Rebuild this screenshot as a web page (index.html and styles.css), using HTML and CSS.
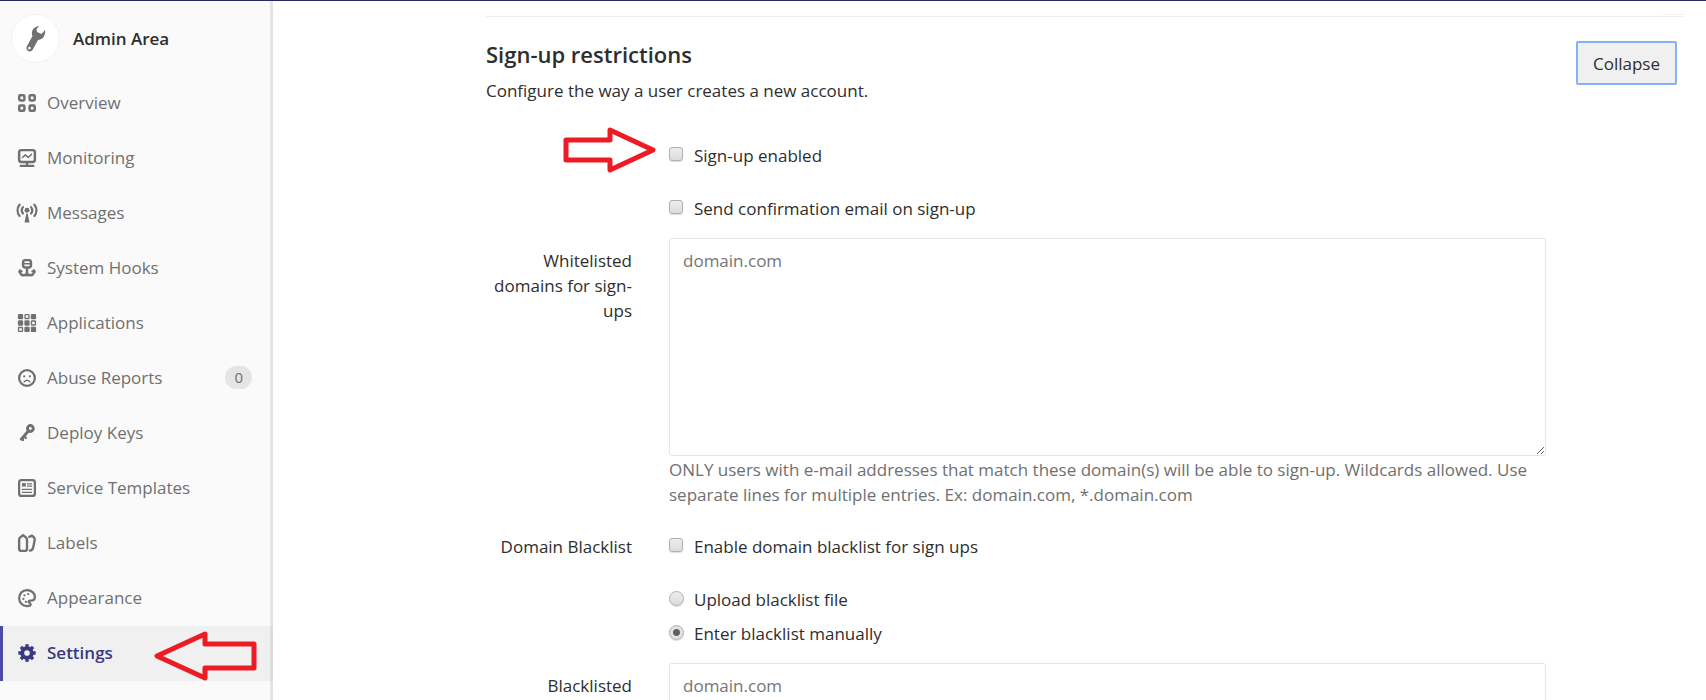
FILE: index.html
```html
<!DOCTYPE html>
<html lang="en">
<head>
<meta charset="utf-8">
<title>Settings · Admin Area</title>
<link rel="stylesheet" href="styles.css">
</head>
<body>
<div class="layout">
  <nav class="sidebar" aria-label="Admin">
    <a class="context" href="#">
      <span class="avatar">
        <svg class="wrench" viewBox="0 0 20 26" fill="currentColor"><path fill-rule="evenodd" d="M13 0C8 .5 4.500 5 6.500 10L.800 20.500C-.8 24 4 27.500 6.500 24L12 14C16 14 20 10 19 4L15.500 8L11 6L10.500 3ZM3.500 20.800A1.300 1.300 0 1 1 3.400 23.400A1.300 1.300 0 0 1 3.500 20.800Z"/></svg>
      </span>
      <span>Admin Area</span>
    </a>
    <ul class="menu">
      <li><a class="item" href="#">
        <svg class="icon" viewBox="0 0 16 16" fill="none" stroke="currentColor" stroke-width="2.200"><rect x="1.100" y="1.100" width="4.600" height="4.600" rx="1"/><rect x="10.300" y="1.100" width="4.600" height="4.600" rx="1"/><rect x="1.100" y="10.300" width="4.600" height="4.600" rx="1"/><rect x="10.300" y="10.300" width="4.600" height="4.600" rx="1"/></svg>
        <span>Overview</span></a></li>
      <li><a class="item" href="#">
        <svg class="icon" viewBox="0 0 16 16" fill="none" stroke="currentColor" stroke-linecap="round" stroke-linejoin="round"><rect x="1" y="1" width="14" height="10.500" rx="2" stroke-width="2.200"/><path d="M4 7.500L6.500 5.200L9 7.500L12 4.800" stroke-width="1.300"/><path d="M8 12V15M2.500 15H13.500" stroke-width="2.200"/></svg>
        <span>Monitoring</span></a></li>
      <li><a class="item" href="#">
        <svg class="icon" viewBox="0 0 16 16" fill="none" stroke="currentColor" stroke-width="2" stroke-linecap="round"><circle cx="8" cy="5.500" r="2.200" fill="currentColor" stroke="none"/><path d="M7.400 8.500H8.600L10.200 16.500H5.800Z" fill="currentColor" stroke="none"/><path d="M4.400 2.800A4.500 4.500 0 0 0 4.400 8.400M11.600 2.800A4.500 4.500 0 0 1 11.600 8.400M1.400 .6A8 8 0 0 0 1.400 10.600M14.600 .6A8 8 0 0 1 14.600 10.600"/></svg>
        <span>Messages</span></a></li>
      <li><a class="item" href="#">
        <svg class="icon" viewBox="0 0 16 16" fill="none" stroke="currentColor" stroke-width="2.200" stroke-linecap="round" stroke-linejoin="round"><rect x="4.500" y="1" width="7" height="6.500" rx="2"/><path d="M5 4.300H11" stroke-width="1.300"/><path d="M8 8V14.500M1.800 10.500C1.800 13 3 14.500 5 14.500C7 14.500 8 13.500 8 12C8 13.500 9 14.500 11 14.500C13 14.500 14.200 13 14.200 10.500"/><path d="M.8 11.500L1.800 10L3.500 11M12.500 11L14.200 10L15.200 11.500" stroke-width="1.500"/></svg>
        <span>System Hooks</span></a></li>
      <li><a class="item" href="#">
        <svg class="icon" viewBox="0 0 16 16" fill="currentColor" stroke="currentColor" stroke-width="1.200"><rect x=".5" y=".5" width="3.500" height="3.500" rx=".5"/><rect x="6.250" y=".5" width="3.500" height="3.500" rx=".5" fill="none"/><rect x="12" y=".5" width="3.500" height="3.500" rx=".5"/><rect x=".5" y="6.250" width="3.500" height="3.500" rx=".5"/><rect x="6.250" y="6.250" width="3.500" height="3.500" rx=".5"/><rect x="12" y="6.250" width="3.500" height="3.500" rx=".5" fill="none"/><rect x=".5" y="12" width="3.500" height="3.500" rx=".5" fill="none"/><rect x="6.250" y="12" width="3.500" height="3.500" rx=".5"/><rect x="12" y="12" width="3.500" height="3.500" rx=".5"/></svg>
        <span>Applications</span></a></li>
      <li><a class="item" href="#">
        <svg class="icon" viewBox="0 0 16 16" fill="none" stroke="currentColor"><circle cx="8" cy="8" r="7" stroke-width="2"/><circle cx="5.500" cy="6.500" r="1" fill="currentColor" stroke="none"/><circle cx="10.500" cy="6.500" r="1" fill="currentColor" stroke="none"/><path d="M5.500 11.300Q8 8.800 10.500 11.300" stroke-width="1.300" stroke-linecap="round"/></svg>
        <span>Abuse Reports</span><span class="badge">0</span></a></li>
      <li><a class="item" href="#">
        <svg class="icon" viewBox="0 0 16 16" fill="none" stroke="currentColor" stroke-linecap="round"><circle cx="11" cy="4" r="2.600" stroke-width="2.600"/><path d="M9 6.500L3 13.500" stroke-width="2.600"/><path d="M5.500 11L7 12.500M3.200 13L4.500 14.200" stroke-width="2"/></svg>
        <span>Deploy Keys</span></a></li>
      <li><a class="item" href="#">
        <svg class="icon" viewBox="0 0 16 16" fill="none" stroke="currentColor"><rect x="1" y="1" width="14" height="14" rx="2" stroke-width="2"/><rect x="3.500" y="3.700" width="3.500" height="3" fill="currentColor" stroke="none"/><path d="M8 4.300H12.500M8 6.300H12.500M3.500 9.300H12.500M3.500 11.800H12.500" stroke-width="1.100"/></svg>
        <span>Service Templates</span></a></li>
      <li><a class="item" href="#">
        <svg class="icon" viewBox="0 0 16 16" fill="none" stroke="currentColor" stroke-width="2.100" stroke-linejoin="round" stroke-linecap="round"><path d="M1 5Q1 4 1.800 3.200L4.500 1L7.200 3.200Q8 4 8 5V13Q8 15 6 15H3Q1 15 1 13Z"/><path d="M10 2.500L12.500 1.500L14.500 3.500Q15 4.500 14.800 5.500L13.500 12Q13 14.500 10.500 14.800"/></svg>
        <span>Labels</span></a></li>
      <li><a class="item" href="#">
        <svg class="icon" viewBox="0 0 16 16" fill="none" stroke="currentColor"><path d="M9.500 15C4 15.800 1 12 1 8C1 4 4 1 8 1C12 1 15 3.800 15 7C15 10 12.800 10.300 11 10.300C9 10.300 8.800 11.500 10.500 12.500C11.800 13.500 11.500 14.700 9.500 15Z" stroke-width="2" stroke-linejoin="round"/><g fill="currentColor" stroke="none"><circle cx="4.800" cy="8.800" r="1"/><circle cx="5.700" cy="5.600" r="1"/><circle cx="9" cy="4.500" r="1"/><circle cx="7" cy="11.500" r="1"/></g></svg>
        <span>Appearance</span></a></li>
      <li><a class="item active" href="#" aria-current="page">
        <svg class="icon" viewBox="0 0 16 16" fill="none" stroke="currentColor"><circle cx="8" cy="8" r="4.200" stroke-width="3.400"/><path d="M8 .3V3M8 13V15.700M.3 8H3M13 8H15.700M2.600 2.600L4.500 4.500M11.500 11.500L13.400 13.400M13.400 2.600L11.500 4.500M4.500 11.500L2.600 13.400" stroke-width="3"/></svg>
        <span>Settings</span></a></li>
    </ul>
  </nav>
  <main class="content">
    <section class="settings">
      <header class="settings-header">
        <div>
          <h1>Sign-up restrictions</h1>
          <p>Configure the way a user creates a new account.</p>
        </div>
        <button class="collapse" type="button">Collapse</button>
      </header>
      <form class="form">
        <div class="row">
          <div class="field checks">
            <label class="check"><input type="checkbox"><span>Sign-up enabled</span></label>
            <label class="check"><input type="checkbox"><span>Send confirmation email on sign-up</span></label>
          </div>
        </div>
        <div class="row">
          <label class="label" for="whitelist">Whitelisted domains for sign-ups</label>
          <div class="field">
            <textarea id="whitelist" placeholder="domain.com"></textarea>
            <p class="help">ONLY users with e-mail addresses that match these domain(s) will be able to sign-up. Wildcards allowed. Use separate lines for multiple entries. Ex: domain.com, *.domain.com</p>
          </div>
        </div>
        <div class="row blacklist">
          <label class="label" for="blacklist-on">Domain Blacklist</label>
          <div class="field">
            <label class="check"><input id="blacklist-on" type="checkbox"><span>Enable domain blacklist for sign ups</span></label>
          </div>
        </div>
        <div class="row">
          <div class="field radios">
            <label class="check"><input type="radio" name="source"><span>Upload blacklist file</span></label>
            <label class="check"><input type="radio" name="source" checked><span>Enter blacklist manually</span></label>
          </div>
        </div>
        <div class="row">
          <label class="label" for="blacklist">Blacklisted</label>
          <div class="field"><textarea id="blacklist" placeholder="domain.com"></textarea></div>
        </div>
      </form>
    </section>
  </main>
</div>
<svg class="arrow arrow-signup" viewBox="0 0 94 46"><path d="M3 13H47V3L90 23L47 43V33H3Z"/></svg>
<svg class="arrow arrow-settings" viewBox="0 0 104 50"><path d="M101 13H52V3L4 25L52 47V37H101Z"/></svg>
</body>
</html>
```
FILE: styles.css
```css
* { box-sizing: border-box; }

body {
  margin: 0;
  background: #fff;
  color: #2e2e2e;
  font: 17px/25px "Open Sans", "Noto Sans", sans-serif;
}

h1, p, ul { margin: 0; padding: 0; }

.layout {
  display: flex;
  height: 100vh;
  overflow: hidden;
  border-top: 1px solid #292961;
}

.sidebar {
  flex: 0 0 273px;
  background: #fafafa;
  box-shadow: inset -3px 0 0 #e5e5e5;
  overflow: hidden;
}

.context {
  display: flex;
  align-items: center;
  gap: 13px;
  padding: 13px 11px;
  color: #2e2e2e;
  font-weight: 600;
  text-decoration: none;
}

.avatar {
  display: flex;
  align-items: center;
  justify-content: center;
  width: 49px;
  height: 49px;
  border: 1px solid #f2f2f2;
  border-radius: 50%;
  background: #fff;
  color: #707070;
}

.wrench { width: 20px; height: 26px; }

.menu { list-style: none; }

.item {
  display: flex;
  align-items: center;
  gap: 11px;
  height: 55px;
  padding: 0 21px 2px 18px;
  color: #707070;
  text-decoration: none;
}

.item.active {
  padding-left: 15px;
  border-left: 3px solid #4b4ba3;
  background: rgba(0, 0, 0, 0.04);
  color: #393982;
  font-weight: 600;
}

.icon { flex: none; width: 18px; height: 18px; overflow: visible; }

.badge {
  margin-left: auto;
  padding: 0 9px;
  border-radius: 12px;
  background: #e5e5e5;
  font-size: 15px;
  line-height: 23px;
}

.content {
  flex: 1;
  min-width: 0;
  overflow: auto;
  scrollbar-width: none;
  padding: 15px 22px 0 213px;
}

.settings {
  position: relative;
  border-top: 1px solid #eee;
}

/* lower edge of the collapsed section above */
.settings::before {
  content: "";
  position: absolute;
  top: -3px;
  right: 0;
  width: 21px;
  height: 1px;
  background: #f2f2f2;
}

.settings-header {
  display: flex;
  justify-content: space-between;
  align-items: flex-start;
  padding: 24px 7px 0 0;
}

h1 {
  margin-bottom: 11px;
  font-size: 22px;
  font-weight: 600;
  line-height: 26px;
}

.collapse {
  height: 44px;
  padding: 0 15px;
  border: 2px solid #83b1fa;
  border-radius: 2px;
  background: #f0f0f0;
  color: #2e2e2e;
  font: inherit;
}

.form { padding: 40px 138px 0 0; }

.row {
  display: grid;
  grid-template-columns: 146px minmax(0, 1fr);
  column-gap: 37px;
}

.field { grid-column: 2; }

.label {
  padding-top: 10px;
  text-align: right;
}

.check {
  display: flex;
  align-items: flex-start;
  gap: 11px;
}

.checks { display: grid; gap: 28px; padding-bottom: 17px; }
.radios { display: grid; gap: 9px; padding: 28px 0 17px; }
.blacklist { padding-top: 17px; }
.blacklist .check { padding-top: 10px; }

.check input {
  appearance: none;
  flex: none;
  width: 14px;
  height: 14px;
  margin: 4px 0 0;
  border: 1px solid #b0b0b0;
  border-radius: 3px;
  background: linear-gradient(#eee, #dcdcdc);
  box-shadow: 0 1px 1px #ddd;
}

.check input[type="radio"] {
  width: 15px;
  height: 15px;
  margin-right: -1px;
  border-radius: 50%;
}

.check input[type="radio"]:checked {
  background: radial-gradient(circle, #606060 3px, #e2e2e2 4px);
}

textarea {
  display: block;
  width: 100%;
  height: 218px;
  padding: 9px 13px;
  border: 1px solid #e5e5e5;
  border-radius: 3px;
  background: #fff;
  color: #2e2e2e;
  font: inherit;
}

textarea::placeholder { color: #757575; }

.help { padding-top: 1px; color: #707070; }

.arrow {
  position: absolute;
  fill: none;
  stroke: #ed1c24;
  stroke-width: 5;
  stroke-linejoin: round;
}

.arrow-signup { left: 563px; top: 127px; width: 94px; height: 46px; }
.arrow-settings { left: 153px; top: 631px; width: 104px; height: 50px; }
```
